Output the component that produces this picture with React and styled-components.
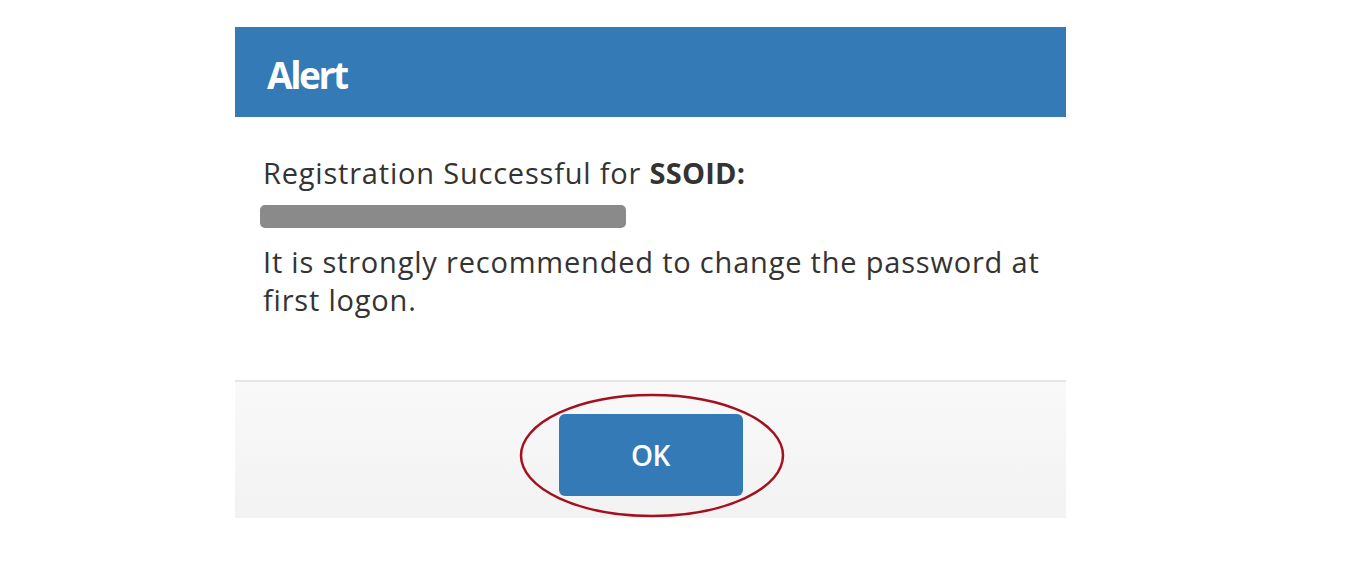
import React from "react";
import styled, { createGlobalStyle } from "styled-components";

const GlobalStyle = createGlobalStyle`
  html, body {
    margin: 0;
    padding: 0;
    background: #ffffff;
  }
  body {
    font-family: "Open Sans", "Liberation Sans", sans-serif;
  }
`;

const Page = styled.div`
  width: 1366px;
  height: 576px;
  padding: 27px 0 0 235px;
  box-sizing: border-box;
`;

const Dialog = styled.div`
  width: 831px;
  display: flex;
  flex-direction: column;
`;

const Header = styled.div`
  height: 90px;
  box-sizing: border-box;
  background: #337ab7;
  display: flex;
  align-items: center;
  padding: 5px 0 0 32px;
`;

const Title = styled.h2`
  margin: 0;
  color: #ffffff;
  font-size: 37px;
  font-weight: 700;
  letter-spacing: -2.4px;
  line-height: 1;
`;

const Body = styled.div`
  height: 263px;
  box-sizing: border-box;
  padding: 37px 28px 0 28px;
  color: #333333;
  font-size: 29px;
  letter-spacing: 0.8px;
  line-height: 38px;

  b {
    letter-spacing: 0.2px;
  }
`;

const Line = styled.div`
  white-space: nowrap;
`;

const Redacted = styled.div`
  width: 366px;
  height: 23px;
  margin: 13px 0 15px -3px;
  border-radius: 5px;
  background: #8a8a8a;
`;

const Footer = styled.div`
  height: 138px;
  border-top: 2px solid #e6e6e6;
  background: linear-gradient(to bottom, #f9f9f9, #f2f2f2);
  display: flex;
  justify-content: center;
  align-items: center;
  box-sizing: border-box;
`;

const ButtonWrap = styled.div`
  position: relative;
  margin-top: 10px;
`;

const OkButton = styled.button`
  width: 184px;
  height: 82px;
  border: none;
  border-radius: 6px;
  background: #337ab7;
  color: #ffffff;
  font-family: "Open Sans", "Liberation Sans", sans-serif;
  font-size: 28px;
  font-weight: 600;
  letter-spacing: -0.5px;
  cursor: pointer;
`;

const Ring = styled.svg`
  position: absolute;
  left: -40px;
  top: -21px;
  width: 266px;
  height: 125px;
  pointer-events: none;
`;

export default function App() {
  return (
    <>
      <GlobalStyle />
      <Page>
        <Dialog>
          <Header>
            <Title>Alert</Title>
          </Header>
          <Body>
            <Line>
              Registration Successful for <b>SSOID:</b>
            </Line>
            <Redacted />
            <Line>It is strongly recommended to change the password at</Line>
            <Line>first logon.</Line>
          </Body>
          <Footer>
            <ButtonWrap>
              <OkButton>OK</OkButton>
              <Ring viewBox="0 0 266 125">
                <ellipse
                  cx="133"
                  cy="62.5"
                  rx="131"
                  ry="60.5"
                  fill="none"
                  stroke="#a3101e"
                  strokeWidth="2.5"
                />
              </Ring>
            </ButtonWrap>
          </Footer>
        </Dialog>
      </Page>
    </>
  );
}
